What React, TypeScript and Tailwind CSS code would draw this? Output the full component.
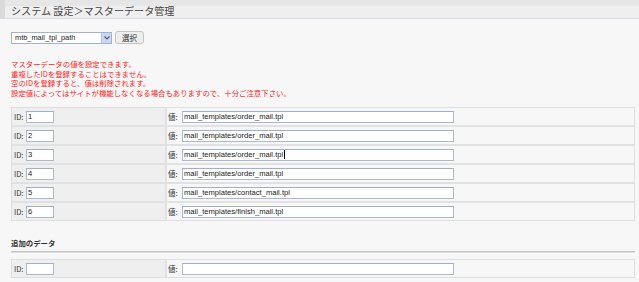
import React from "react";

const rows = [
  { id: "1", v: "mail_templates/order_mail.tpl" },
  { id: "2", v: "mail_templates/order_mail.tpl" },
  { id: "3", v: "mail_templates/order_mail.tpl", caret: true },
  { id: "4", v: "mail_templates/order_mail.tpl" },
  { id: "5", v: "mail_templates/contact_mail.tpl" },
  { id: "6", v: "mail_templates/finish_mail.tpl" },
];

const jp = "font-['Noto_Sans_CJK_JP',sans-serif]";
const latin = "font-['Liberation_Sans','Noto_Sans_CJK_JP',sans-serif]";

function Field({ w, value, caret }: { w: string; value?: string; caret?: boolean }) {
  return (
    <div
      className={`${w} h-[12px] bg-white border border-[#a9b9d2] border-t-[#9fb0cb] flex items-center pl-[1px] text-[7.6px] leading-none text-[#222] ${latin}`}
    >
      <span>{value}</span>
      {caret && <span className="w-[1px] h-[9px] bg-black ml-[1px]" />}
    </div>
  );
}

function Row({ id, v, caret, last }: { id?: string; v?: string; caret?: boolean; last?: boolean }) {
  return (
    <div className={`flex box-content h-[17px] ${last ? "" : "border-b-2 border-[#e1e1e1]"}`}>
      <div className="w-[155px] bg-[#efefef] border-r-2 border-[#e1e1e1] flex items-center pl-[2px]">
        <span className={`w-[12px] text-[7.5px] leading-none text-[#333] ${jp}`}>ID:</span>
        <Field w="w-[28px]" value={id} />
      </div>
      <div className="flex-1 bg-[#f7f7f7] flex items-center pl-[1px]">
        <span className={`w-[14px] text-[7.5px] leading-none text-[#333] ${jp}`}>値:</span>
        <Field w="w-[272px]" value={v} caret={caret} />
      </div>
    </div>
  );
}

export default function App() {
  return (
    <div className="w-[639px] h-[282px] bg-[#f7f7f7] overflow-hidden">
      <div className="h-[19px] flex border-b border-[#d9d9e6] bg-[linear-gradient(#e6e6e6_0,#e6e6e6_6px,#efefef_6px,#efefef_18px)]">
        <div className="w-[5px] bg-[#dadada]" />
        <div className={`pl-[6px] pt-[5px] text-[10.1px] leading-[12px] text-[#444] ${jp}`}>
          システム 設定＞マスターデータ管理
        </div>
      </div>

      <div className="pl-[11px] pr-[4px]">
        <div className="mt-[12px] flex items-center">
          <div className="w-[101px] h-[12px] border border-[#a4b3c9] bg-white flex items-center">
            <span className={`flex-1 pl-[3px] text-[7.4px] leading-none text-[#222] ${latin}`}>mtb_mail_tpl_path</span>
            <div className="w-[10px] h-[10px] bg-[#c9d8f0] border-l border-[#b4c6e4] flex items-center justify-center">
              <svg width="6" height="4" viewBox="0 0 6 4">
                <path d="M0.5 0.5 L3 3 L5.5 0.5" fill="none" stroke="#4d6185" strokeWidth="1.2" />
              </svg>
            </div>
          </div>
          <div
            className={`ml-[3px] w-[29px] h-[13px] rounded-[3px] border border-[#c3c3c3] bg-[#eeeeee] flex items-center justify-center text-[7.5px] leading-none text-[#333] ${jp}`}
          >
            選択
          </div>
        </div>

        <div className={`mt-[15px] text-[7.4px] leading-[9.5px] text-[#ff1a1a] ${jp}`}>
          <div>マスターデータの値を設定できます。</div>
          <div>重複したIDを登録することはできません。</div>
          <div>空のIDを登録すると、値は削除されます。</div>
          <div>設定値によってはサイトが機能しなくなる場合もありますので、十分ご注意下さい。</div>
        </div>

        <div className="mt-[10px] border border-[#dedede]">
          {rows.map((r, i) => (
            <Row key={r.id} id={r.id} v={r.v} caret={r.caret} last={i === rows.length - 1} />
          ))}
        </div>

        <div className={`mt-[17px] text-[7.4px] leading-[10px] font-bold text-[#333] ${jp}`}>追加のデータ</div>
        <div className="mt-[3px] border-t border-b border-t-[#c4c4c4] border-b-[#dedede]" />

        <div className="mt-[6px] border border-[#dedede]">
          <Row last />
        </div>
      </div>
    </div>
  );
}
